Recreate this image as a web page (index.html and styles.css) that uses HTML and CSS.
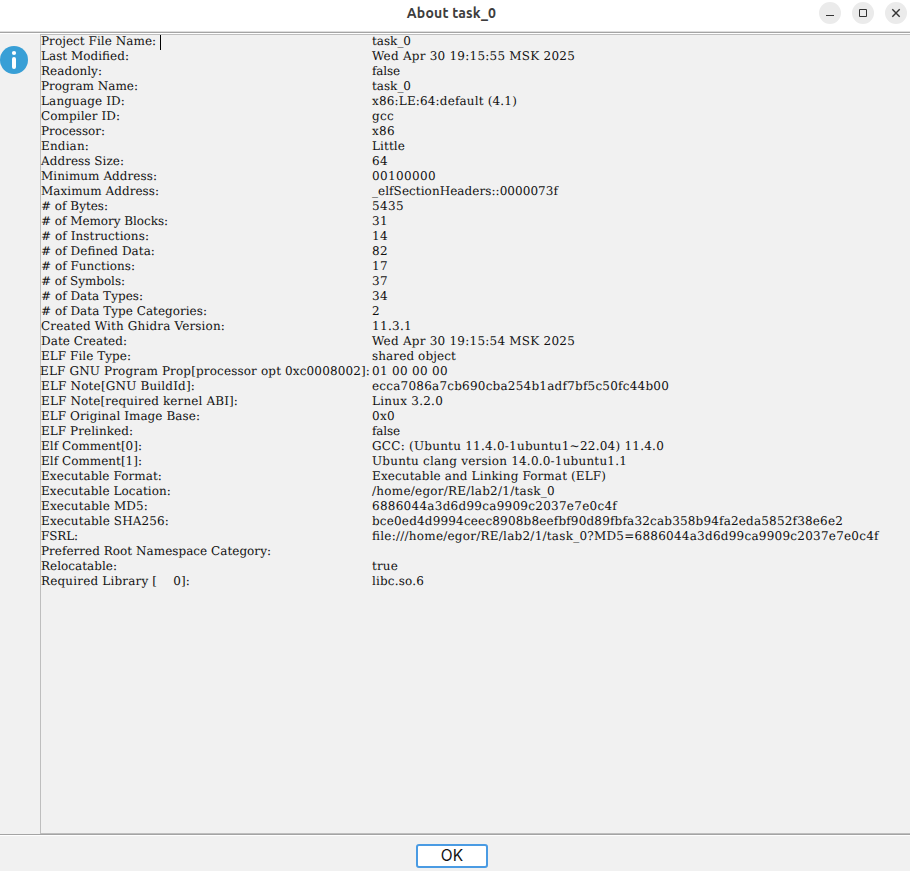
FILE: index.html
```html
<!DOCTYPE html>
<html lang="en">
<head>
<meta charset="utf-8">
<title>About task_0</title>
<link rel="stylesheet" href="styles.css">
</head>
<body>
<header class="titlebar">
  <h1>About task_0</h1>
  <div class="controls">
    <button aria-label="Minimize"><svg viewBox="0 0 22 22"><path d="M7 13.5h8"/></svg></button>
    <button aria-label="Maximize"><svg viewBox="0 0 22 22"><path d="M7.5 7.5h7v7h-7z"/></svg></button>
    <button aria-label="Close"><svg viewBox="0 0 22 22"><path class="cross" d="M7.3 7.3l7.4 7.4M14.7 7.3l-7.4 7.4"/></svg></button>
  </div>
</header>
<main class="content">
  <aside class="side">
    <svg class="info" viewBox="0 0 28 28"><circle cx="14" cy="14" r="14" fill="#389fd6"/><circle cx="14" cy="7" r="2.1" fill="#fff"/><path d="M14 13v8" stroke="#fff" stroke-width="4" stroke-linecap="round"/></svg>
  </aside>
  <section class="panel" id="panel"></section>
</main>
<footer class="actions"><button class="ok">OK</button></footer>
<script src="script.js"></script>
</body>
</html>
```
FILE: styles.css
```css
* { box-sizing: border-box; }
body { margin: 0; width: 910px; height: 871px; display: flex; flex-direction: column; overflow: hidden; background: #f1f1f1; color: #111; }
.titlebar { height: 32px; flex: none; display: grid; grid-template-columns: 1fr auto 1fr; background: #fff; border-bottom: 1px solid #dedede; }
h1 { grid-column: 2; margin: 0 0 0 -7px; font: 700 14px/26px "Ubuntu", "Noto Sans", sans-serif; letter-spacing: 0.2px; color: #3d3d3d; }
.controls { display: flex; justify-content: flex-end; gap: 11px; padding: 2px 3px 0 0; }
.controls button { width: 22px; height: 22px; padding: 0; border: 0; border-radius: 50%; background: #ebebeb; }
.controls svg { display: block; width: 22px; height: 22px; fill: none; stroke: #333; stroke-width: 1; }
.controls .cross { stroke-width: 1.4; }
.content { height: 803px; flex: none; display: flex; border-top: 1px solid #a4a4a4; border-bottom: 1px solid #a4a4a4; box-shadow: inset 0 1px #fff; padding-top: 1px; }
.side { width: 40px; flex: none; padding-top: 12px; }
.info { display: block; width: 28px; height: 28px; }
.panel { flex: 1; min-width: 0; border: 1px solid #bebebe; border-right: 0; font: 12px/15px "DejaVu Serif", serif; font-feature-settings: "liga" 1; text-rendering: geometricPrecision; white-space: pre; }
.row { display: grid; grid-template-columns: 331px 1fr; height: 15px; line-height: 13px; }
.row.wide .label { margin-left: -1px; }
.caret { display: inline-block; width: 1px; height: 15px; background: #000; vertical-align: top; }
.actions { flex: none; height: 36px; display: flex; justify-content: center; align-items: flex-start; padding: 8px 6px 0 0; border-top: 1px solid #fff; }
.ok { width: 72px; height: 24px; padding: 0; border: 2px solid #4a9be3; border-radius: 3px; background: #fff; font: 15.5px/20px Inter, sans-serif; color: #111; }
```
FILE: script.js
```js
const rows = [
  ["Project File Name: ", "task_0"],
  ["Last Modified:", "Wed Apr 30 19:15:55 MSK 2025"],
  ["Readonly:", "false"],
  ["Program Name:", "task_0"],
  ["Language ID:", "x86:LE:64:default (4.1)"],
  ["Compiler ID:", "gcc"],
  ["Processor:", "x86"],
  ["Endian:", "Little"],
  ["Address Size:", "64"],
  ["Minimum Address:", "00100000"],
  ["Maximum Address:", "_elfSectionHeaders::0000073f"],
  ["# of Bytes:", "5435"],
  ["# of Memory Blocks:", "31"],
  ["# of Instructions:", "14"],
  ["# of Defined Data:", "82"],
  ["# of Functions:", "17"],
  ["# of Symbols:", "37"],
  ["# of Data Types:", "34"],
  ["# of Data Type Categories:", "2"],
  ["Created With Ghidra Version:", "11.3.1"],
  ["Date Created:", "Wed Apr 30 19:15:54 MSK 2025"],
  ["ELF File Type:", "shared object"],
  ["ELF GNU Program Prop[processor opt 0xc0008002]:", "01 00 00 00"],
  ["ELF Note[GNU BuildId]:", "ecca7086a7cb690cba254b1adf7bf5c50fc44b00"],
  ["ELF Note[required kernel ABI]:", "Linux 3.2.0"],
  ["ELF Original Image Base:", "0x0"],
  ["ELF Prelinked:", "false"],
  ["Elf Comment[0]:", "GCC: (Ubuntu 11.4.0-1ubuntu1~22.04) 11.4.0"],
  ["Elf Comment[1]:", "Ubuntu clang version 14.0.0-1ubuntu1.1"],
  ["Executable Format:", "Executable and Linking Format (ELF)"],
  ["Executable Location:", "/home/egor/RE/lab2/1/task_0"],
  ["Executable MD5:", "6886044a3d6d99ca9909c2037e7e0c4f"],
  ["Executable SHA256:", "bce0ed4d9994ceec8908b8eefbf90d89fbfa32cab358b94fa2eda5852f38e6e2"],
  ["FSRL:", "file:///home/egor/RE/lab2/1/task_0?MD5=6886044a3d6d99ca9909c2037e7e0c4f"],
  ["Preferred Root Namespace Category:", ""],
  ["Relocatable:", "true"],
  ["Required Library [    0]:", "libc.so.6"]
];

const ctx = document.createElement("canvas").getContext("2d");
ctx.font = '12px "DejaVu Serif"';

// Average spacing that brings a string to whole-pixel glyph advances.
function spacing(text) {
  let total = 0;
  for (const ch of text) total += ch === "/" ? 5 : Math.round(ctx.measureText(ch).width);
  return text ? (total - ctx.measureText(text).width) / text.length : 0;
}

function cell(name, text) {
  const el = document.createElement("span");
  el.className = name;
  el.textContent = text;
  el.style.letterSpacing = spacing(text).toFixed(4) + "px";
  return el;
}

const panel = document.getElementById("panel");
rows.forEach(([label, value], i) => {
  const row = document.createElement("div");
  row.className = label.length > 40 ? "row wide" : "row";
  const left = cell("label", label);
  if (i === 0) {
    const caret = document.createElement("i");
    caret.className = "caret";
    left.append(caret);
  }
  row.append(left, cell("value", value));
  panel.append(row);
});
```
